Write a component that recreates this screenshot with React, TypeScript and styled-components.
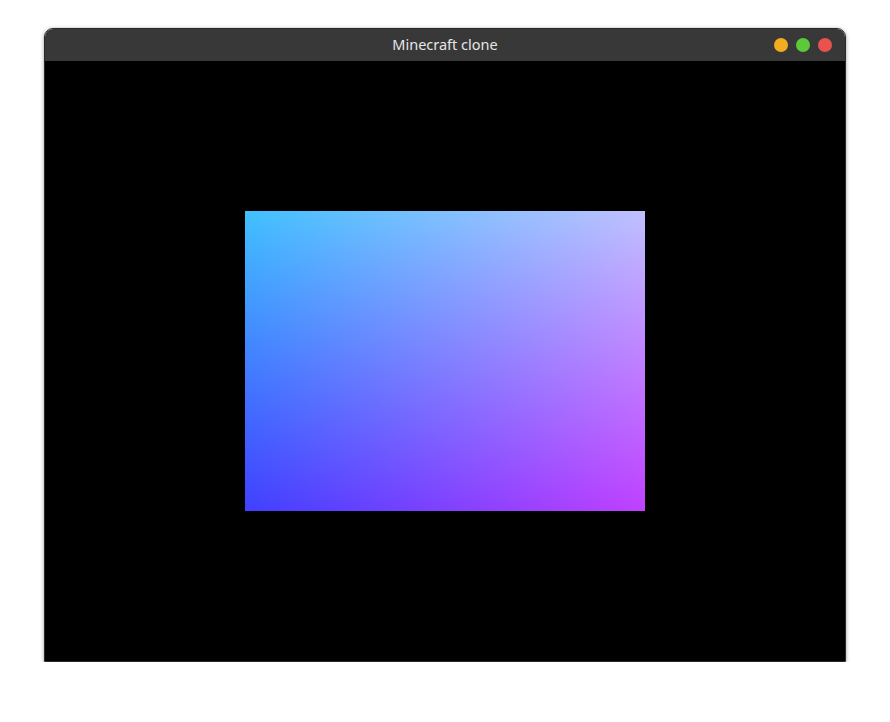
import React from "react";
import styled, { createGlobalStyle } from "styled-components";

const GlobalStyle = createGlobalStyle`
  html, body {
    margin: 0;
    padding: 0;
    background: #ffffff;
  }
  body {
    font-family: "Noto Sans", "DejaVu Sans", sans-serif;
  }
`;

const Page = styled.div`
  padding: 28px 0 0 44px;
`;

const Window = styled.div`
  width: 800px;
  border: 1px solid #2a2a2a;
  border-radius: 9px 9px 0 0;
  overflow: hidden;
  box-shadow: 0 1px 4px rgba(0, 0, 0, 0.35), 0 0 1px rgba(0, 0, 0, 0.3);
`;

const TitleBar = styled.div`
  position: relative;
  height: 32px;
  padding-bottom: 2px;
  box-sizing: border-box;
  background: #383838;
  display: flex;
  align-items: center;
  justify-content: center;
  color: #e6e6e6;
  font-size: 14.5px;
`;

const Controls = styled.div`
  position: absolute;
  right: 13px;
  top: 9px;
  display: flex;
  gap: 8px;
`;

const Dot = styled.span<{ $color: string }>`
  width: 14px;
  height: 14px;
  border-radius: 50%;
  background: ${(p) => p.$color};
`;

const Canvas = styled.div`
  height: 600px;
  background: #000000;
  display: flex;
  align-items: center;
  justify-content: center;
`;

const Quad = styled.div`
  width: 400px;
  height: 300px;
  background-image: linear-gradient(to right, rgb(64, 0, 255), rgb(192, 0, 255)),
    linear-gradient(to bottom, rgb(0, 192, 0), rgb(0, 64, 0));
  background-blend-mode: lighten;
`;

export default function App() {
  return (
    <Page>
      <GlobalStyle />
      <Window>
        <TitleBar>
          Minecraft clone
          <Controls>
            <Dot $color="#f3ab1f" />
            <Dot $color="#5bc93a" />
            <Dot $color="#e9524e" />
          </Controls>
        </TitleBar>
        <Canvas>
          <Quad />
        </Canvas>
      </Window>
    </Page>
  );
}
